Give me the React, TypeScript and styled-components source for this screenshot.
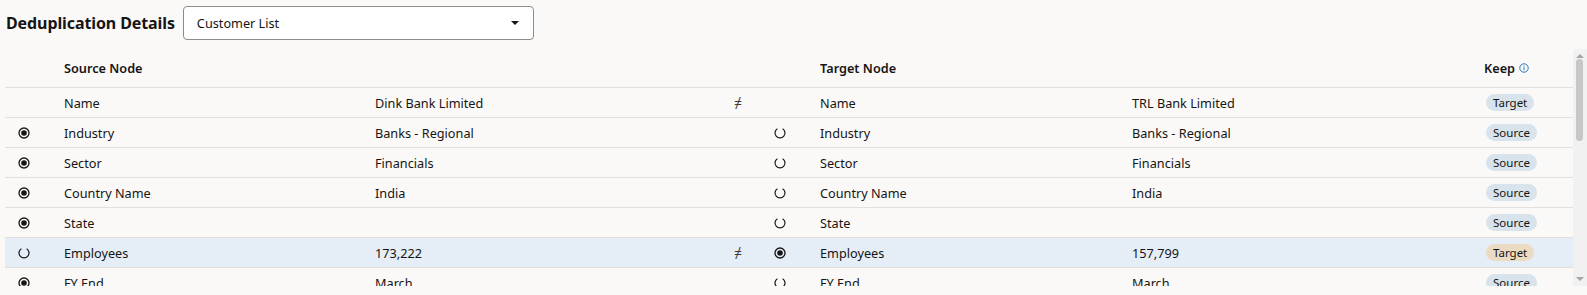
import React from "react";
import styled, { createGlobalStyle } from "styled-components";

const Global = createGlobalStyle`
  html, body { margin: 0; padding: 0; background: #faf9f8; }
  body { font-family: "Noto Sans", "Open Sans", sans-serif; color: #161513; }
  * { box-sizing: border-box; }
`;

const Page = styled.div`
  width: 1587px;
  height: 295px;
  overflow: hidden;
  background: #faf9f8;
`;

const TopBar = styled.div`
  display: flex;
  align-items: center;
  gap: 8px;
  padding: 6px 0 0 6px;
  height: 40px;
`;

const Title = styled.h1`
  margin: 0;
  font-size: 16px;
  font-weight: 700;
  letter-spacing: -0.1px;
  color: #161513;
`;

const Select = styled.div`
  width: 351px;
  height: 34px;
  background: #fff;
  border: 1px solid #8f8c88;
  border-radius: 4px;
  display: flex;
  align-items: center;
  justify-content: space-between;
  padding: 0 14px 0 13px;
  font-size: 12.7px;
  color: #161513;
`;

const Caret = styled.span`
  width: 0;
  height: 0;
  border-left: 4px solid transparent;
  border-right: 4px solid transparent;
  border-top: 4px solid #161513;
`;

const TableArea = styled.div`
  margin: 9px 0 0 5px;
  width: 1582px;
  height: 237px;
  display: flex;
`;

const Viewport = styled.div`
  flex: 1;
  overflow: hidden;
`;

const ScrollBar = styled.div`
  width: 14px;
  display: flex;
  flex-direction: column;
  background: #f1f1f1;
`;

const ArrowBtn = styled.div<{ $dir: "up" | "down" }>`
  height: 9px;
  display: flex;
  justify-content: center;
  align-items: ${(p) => (p.$dir === "up" ? "flex-end" : "flex-start")};
  &::after {
    content: "";
    width: 0;
    height: 0;
    border-left: 4px solid transparent;
    border-right: 4px solid transparent;
    ${(p) =>
      p.$dir === "up"
        ? "border-bottom: 4px solid #a6a6a6;"
        : "border-top: 4px solid #a6a6a6;"}
  }
`;

const Track = styled.div`
  flex: 1;
  padding: 1px 3px 0 3px;
`;

const Thumb = styled.div`
  height: 82px;
  width: 7px;
  border-radius: 4px;
  background: #c7c7c7;
`;

const cols = "59px 311px 352px 30px 63px 312px 352px 1fr";

const HeadRow = styled.div`
  display: grid;
  grid-template-columns: ${cols};
  height: 39px;
  align-items: center;
  border-bottom: 1px solid #e2e0dd;
  font-size: 12.7px;
  font-weight: 600;
`;

const Row = styled.div<{ $selected?: boolean }>`
  display: grid;
  grid-template-columns: ${cols};
  height: 30px;
  align-items: center;
  border-bottom: 1px solid #e2e0dd;
  background: ${(p) => (p.$selected ? "#e5eef7" : "transparent")};
  font-size: 12.7px;
`;

const Cell = styled.div<{ $pad?: number }>`
  padding-left: ${(p) => p.$pad ?? 0}px;
  display: flex;
  align-items: center;
  white-space: nowrap;
  overflow: hidden;
`;

const Neq = styled.span`
  font-size: 14px;
  color: #3c3a37;
`;

const Badge = styled.span<{ $kind: "source" | "target" }>`
  display: inline-flex;
  align-items: center;
  height: 17px;
  padding: 0 7px;
  border-radius: 9px;
  font-size: 11.5px;
  margin-left: 2px;
  background: ${(p) => (p.$kind === "target" ? "#ecdbc3" : "#d8e3eb")};
  color: #161513;
`;

const KeepHead = styled.span`
  display: inline-flex;
  align-items: center;
  gap: 4px;
`;

const Radio = ({ on }: { on: boolean }) =>
  on ? (
    <svg width="12" height="12" viewBox="0 0 12 12">
      <circle cx="6" cy="6" r="5" fill="none" stroke="#161513" strokeWidth="1.3" />
      <circle cx="6" cy="6" r="2.8" fill="#161513" />
    </svg>
  ) : (
    <svg width="12" height="12" viewBox="0 0 12 12">
      <path d="M3.4 1.7 A5 5 0 1 0 8.6 1.7" fill="none" stroke="#161513" strokeWidth="1.2" />
    </svg>
  );

const InfoIcon = () => (
  <svg width="10" height="10" viewBox="0 0 10 10">
    <circle cx="5" cy="5" r="4.2" fill="none" stroke="#2f76b9" strokeWidth="1" />
    <rect x="4.5" y="4.2" width="1" height="3" fill="#2f76b9" />
    <rect x="4.5" y="2.5" width="1" height="1" fill="#2f76b9" />
  </svg>
);

type Item = {
  label: string;
  src: string;
  tgt: string;
  keep: "source" | "target" | null;
  diff?: boolean;
  selected?: boolean;
  badge: "source" | "target";
  tan?: boolean;
};

const rows: Item[] = [
  { label: "Name", src: "Dink Bank Limited", tgt: "TRL Bank Limited", keep: null, diff: true, badge: "target" },
  { label: "Industry", src: "Banks - Regional", tgt: "Banks - Regional", keep: "source", badge: "source" },
  { label: "Sector", src: "Financials", tgt: "Financials", keep: "source", badge: "source" },
  { label: "Country Name", src: "India", tgt: "India", keep: "source", badge: "source" },
  { label: "State", src: "", tgt: "", keep: "source", badge: "source" },
  { label: "Employees", src: "173,222", tgt: "157,799", keep: "target", diff: true, selected: true, badge: "target", tan: true },
  { label: "FY End", src: "March", tgt: "March", keep: "source", badge: "source" },
  { label: "City", src: "Mumbai", tgt: "Mumbai", keep: "source", badge: "source" },
  { label: "Currency", src: "INR", tgt: "INR", keep: "source", badge: "source" },
  { label: "Exchange", src: "NSE", tgt: "NSE", keep: "source", badge: "source" },
  { label: "Ticker", src: "DINK", tgt: "DINK", keep: "source", badge: "source" },
  { label: "Founded", src: "1994", tgt: "1994", keep: "source", badge: "source" },
  { label: "Website", src: "www.dinkbank.com", tgt: "www.dinkbank.com", keep: "source", badge: "source" },
  { label: "Phone", src: "+91 22 6652 1000", tgt: "+91 22 6652 1000", keep: "source", badge: "source" },
  { label: "Postal Code", src: "400013", tgt: "400013", keep: "source", badge: "source" },
  { label: "Region", src: "APAC", tgt: "APAC", keep: "source", badge: "source" },
  { label: "Segment", src: "Enterprise", tgt: "Enterprise", keep: "source", badge: "source" },
  { label: "Status", src: "Active", tgt: "Active", keep: "source", badge: "source" },
  { label: "Owner", src: "Global Accounts", tgt: "Global Accounts", keep: "source", badge: "source" },
];

export default function App() {
  return (
    <Page>
      <Global />
      <TopBar>
        <Title>Deduplication Details</Title>
        <Select>
          <span>Customer List</span>
          <Caret />
        </Select>
      </TopBar>
      <TableArea>
        <Viewport>
          <HeadRow>
            <Cell />
            <Cell>Source Node</Cell>
            <Cell />
            <Cell />
            <Cell />
            <Cell>Target Node</Cell>
            <Cell />
            <Cell>
              <KeepHead>
                Keep <InfoIcon />
              </KeepHead>
            </Cell>
          </HeadRow>
          {rows.map((r) => (
            <Row key={r.label} $selected={r.selected}>
              <Cell $pad={13}>{r.keep && <Radio on={r.keep === "source"} />}</Cell>
              <Cell>{r.label}</Cell>
              <Cell>{r.src}</Cell>
              <Cell $pad={7}>{r.diff && <Neq>≠</Neq>}</Cell>
              <Cell $pad={17}>{r.keep && <Radio on={r.keep === "target"} />}</Cell>
              <Cell>{r.label}</Cell>
              <Cell>{r.tgt}</Cell>
              <Cell>
                <Badge $kind={r.tan ? "target" : "source"}>
                  {r.badge === "target" ? "Target" : "Source"}
                </Badge>
              </Cell>
            </Row>
          ))}
        </Viewport>
        <ScrollBar>
          <ArrowBtn $dir="up" />
          <Track>
            <Thumb />
          </Track>
          <ArrowBtn $dir="down" />
        </ScrollBar>
      </TableArea>
    </Page>
  );
}
